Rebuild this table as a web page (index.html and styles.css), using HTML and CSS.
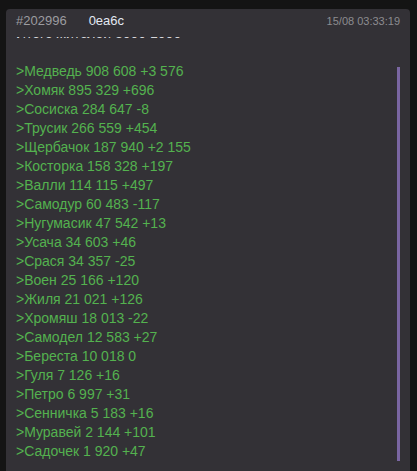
FILE: index.html
```html
<!DOCTYPE html>
<html lang="ru">
<head>
<meta charset="utf-8">
<title>#202996</title>
<link rel="stylesheet" href="styles.css">
</head>
<body>
<div class="card">
  <div class="post-head">
    <span class="post-num">#202996</span>
    <span class="post-id">0ea6c</span>
    <span class="post-time">15/08 03:33:19</span>
  </div>
  <div class="post-body">
    <div class="post-text">
      <div class="line plain">Итого жителей 3000 1000</div>
      <div class="line">&nbsp;</div>
      <div class="line quote">&gt;Медведь 908 608 +3 576</div>
      <div class="line quote">&gt;Хомяк 895 329 +696</div>
      <div class="line quote">&gt;Сосиска 284 647 -8</div>
      <div class="line quote">&gt;Трусик 266 559 +454</div>
      <div class="line quote">&gt;Щербачок 187 940 +2 155</div>
      <div class="line quote">&gt;Косторка 158 328 +197</div>
      <div class="line quote">&gt;Валли 114 115 +497</div>
      <div class="line quote">&gt;Самодур 60 483 -117</div>
      <div class="line quote">&gt;Нугумасик 47 542 +13</div>
      <div class="line quote">&gt;Усача 34 603 +46</div>
      <div class="line quote">&gt;Срася 34 357 -25</div>
      <div class="line quote">&gt;Воен 25 166 +120</div>
      <div class="line quote">&gt;Жиля 21 021 +126</div>
      <div class="line quote">&gt;Хромяш 18 013 -22</div>
      <div class="line quote">&gt;Самодел 12 583 +27</div>
      <div class="line quote">&gt;Береста 10 018 0</div>
      <div class="line quote">&gt;Гуля 7 126 +16</div>
      <div class="line quote">&gt;Петро 6 997 +31</div>
      <div class="line quote">&gt;Сенничка 5 183 +16</div>
      <div class="line quote">&gt;Муравей 2 144 +101</div>
      <div class="line quote">&gt;Садочек 1 920 +47</div>
    </div>
    <div class="scroll-thumb"></div>
  </div>
</div>
</body>
</html>
```
FILE: styles.css
```css
html, body {
  margin: 0;
  padding: 0;
  background: #141414;
  height: 100%;
  overflow: hidden;
}

body {
  font-family: "Liberation Sans", Arial, sans-serif;
}

.card {
  margin: 9px 7px 0 6px;
  background: #333136;
  border-radius: 4px 4px 0 0;
  padding: 0 10px 30px 10px;
}

.post-head {
  display: flex;
  align-items: baseline;
  padding-top: 4px;
  height: 24px;
  line-height: 16px;
}

.post-num {
  font-size: 13px;
  color: #9c9ca0;
}

.post-id {
  font-size: 13px;
  color: #e2e8f2;
  margin-left: 22px;
}

.post-time {
  margin-left: auto;
  font-size: 11px;
  color: #8c8c90;
}

.post-body {
  display: flex;
  overflow: hidden;
}

.post-text {
  flex: 1;
  margin-top: -13px;
  font-size: 14px;
  line-height: 19px;
}

.line.plain {
  color: #d8d8dc;
}

.line.quote {
  color: #54b24f;
}

.scroll-thumb {
  width: 3px;
  margin-top: 30px;
  background: #7a66a2;
}
```
